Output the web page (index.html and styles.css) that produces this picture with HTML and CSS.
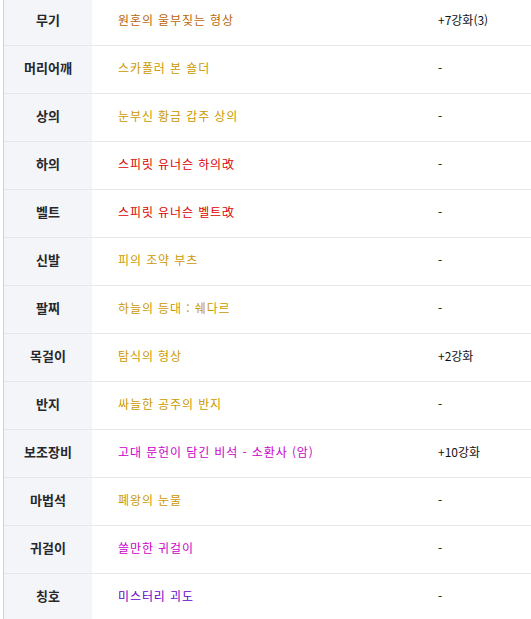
FILE: index.html
```html
<!DOCTYPE html>
<html lang="ko">
<head>
<meta charset="utf-8">
<link rel="stylesheet" href="styles.css">
</head>
<body>
<div class="table">
  <div class="row"><div class="label">무기</div><div class="name c-unique">원혼의 울부짖는 형상</div><div class="value">+7강화(3)</div></div>
  <div class="row"><div class="label">머리어깨</div><div class="name c-gold">스카폴러 본 숄더</div><div class="value">-</div></div>
  <div class="row"><div class="label">상의</div><div class="name c-gold">눈부신 황금 갑주 상의</div><div class="value">-</div></div>
  <div class="row"><div class="label">하의</div><div class="name c-red">스피릿 유너슨 하의改</div><div class="value">-</div></div>
  <div class="row"><div class="label">벨트</div><div class="name c-red">스피릿 유너슨 벨트改</div><div class="value">-</div></div>
  <div class="row"><div class="label">신발</div><div class="name c-gold">피의 조약 부츠</div><div class="value">-</div></div>
  <div class="row"><div class="label">팔찌</div><div class="name c-gold">하늘의 등대 : 쉐다르</div><div class="value">-</div></div>
  <div class="row"><div class="label">목걸이</div><div class="name c-gold">탐식의 형상</div><div class="value">+2강화</div></div>
  <div class="row"><div class="label">반지</div><div class="name c-gold">싸늘한 공주의 반지</div><div class="value">-</div></div>
  <div class="row"><div class="label">보조장비</div><div class="name c-magenta">고대 문헌이 담긴 비석 - 소환사 (암)</div><div class="value">+10강화</div></div>
  <div class="row"><div class="label">마법석</div><div class="name c-gold">폐왕의 눈물</div><div class="value">-</div></div>
  <div class="row"><div class="label">귀걸이</div><div class="name c-magenta">쓸만한 귀걸이</div><div class="value">-</div></div>
  <div class="row"><div class="label">칭호</div><div class="name c-purple">미스터리 괴도</div><div class="value">-</div></div>
</div>
</body>
</html>
```

FILE: styles.css
```css
html, body {
  margin: 0;
  padding: 0;
  background: #ffffff;
  overflow: hidden;
}

.table {
  margin: -2px 0 0 3px;
  border-left: 1px solid #cfd0d4;
  font-family: "Noto Sans CJK KR", "Noto Sans", sans-serif;
}

.row {
  display: grid;
  grid-template-columns: 88px 346px 1fr;
  height: 47px;
  border-bottom: 1px solid #e6e7ea;
  align-items: center;
}

.label {
  box-sizing: border-box;
  height: 100%;
  padding-bottom: 4px;
  display: flex;
  align-items: center;
  justify-content: center;
  background: #f4f5f9;
  font-size: 13px;
  font-weight: 700;
  color: #26272b;
}

.name {
  padding-left: 26px;
  padding-bottom: 4px;
  font-size: 12px;
  letter-spacing: 0.9px;
  white-space: nowrap;
}

.value {
  padding-bottom: 4px;
  font-size: 12px;
  color: #111111;
  white-space: nowrap;
}

.c-unique { color: #bb6408; }
.c-gold { color: #cc9900; }
.c-red { color: #dd0000; }
.c-magenta { color: #cc00cc; }
.c-purple { color: #6a00cc; }
```
